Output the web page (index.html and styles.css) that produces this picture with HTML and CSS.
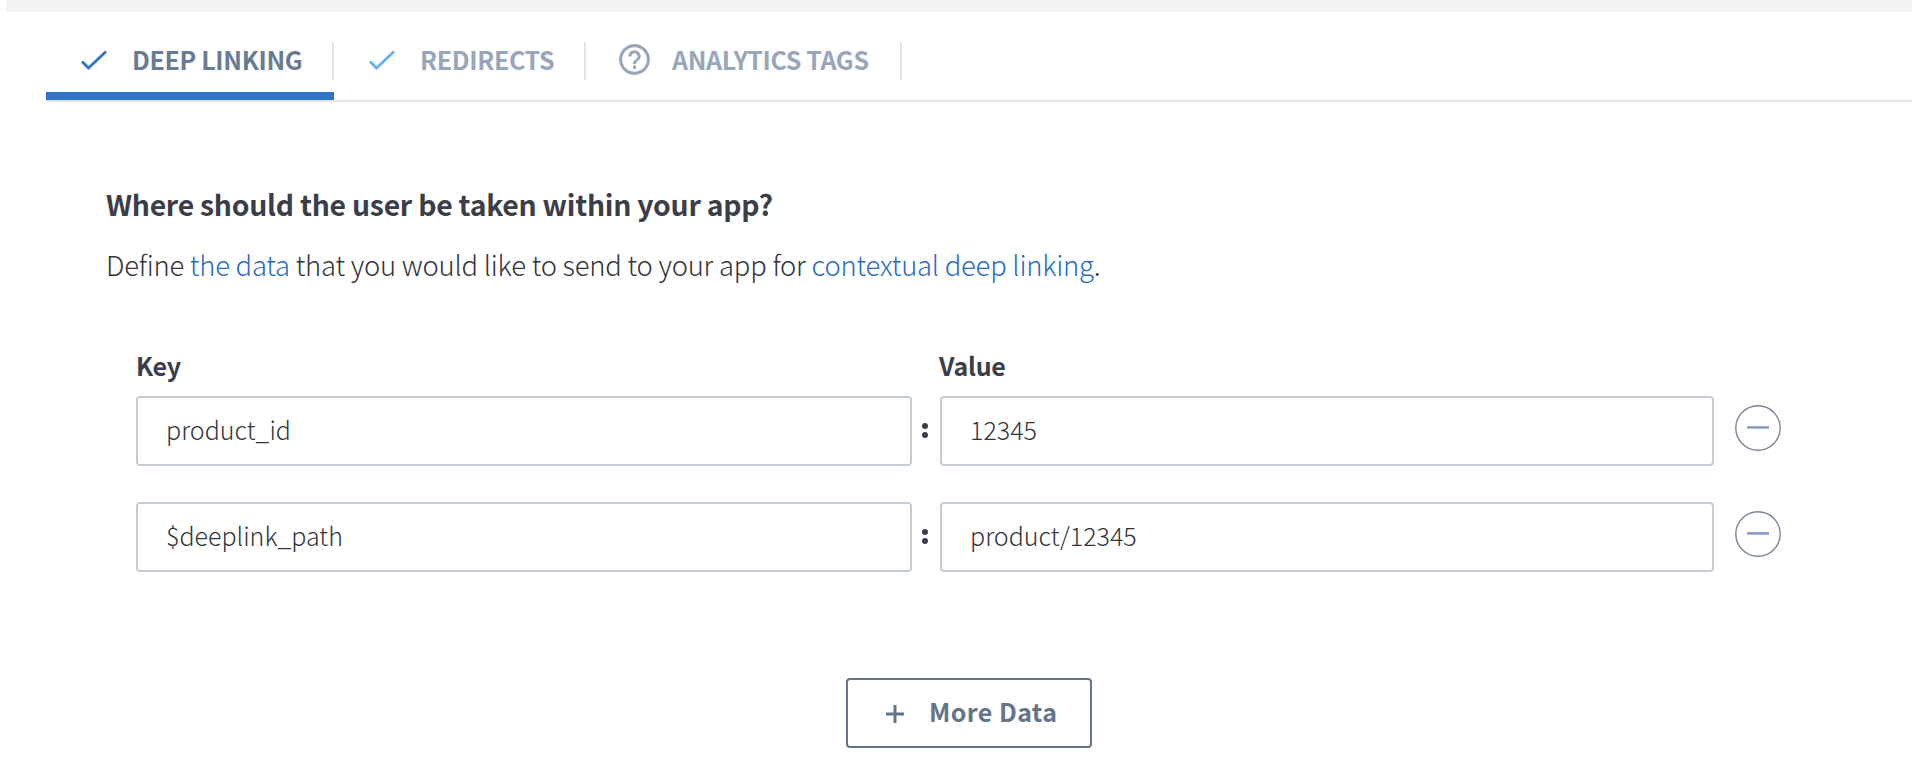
FILE: index.html
```
<!DOCTYPE html>
<html lang="en">
<head>
<meta charset="utf-8">
<title>Deep Linking</title>
<link rel="stylesheet" href="styles.css">
</head>
<body>
<div class="topbar"></div>
<nav class="tabs">
  <a class="tab tab-deep active"><svg class="check" viewBox="0 0 28 24"><path d="M2 12.500L8.500 19L26 2.500"/></svg><span>DEEP LINKING</span></a>
  <a class="tab tab-redirects"><svg class="check" viewBox="0 0 28 24"><path d="M2 12.500L8.500 19L26 2.500"/></svg><span>REDIRECTS</span></a>
  <a class="tab tab-tags"><svg class="help" viewBox="0 0 24 24"><path d="M11 18h2v-2h-2v2zm1-16C6.48 2 2 6.480 2 12s4.480 10 10 10 10-4.480 10-10S17.520 2 12 2zm0 18c-4.410 0-8-3.590-8-8s3.590-8 8-8 8 3.590 8 8-3.590 8-8 8zm0-14c-2.210 0-4 1.790-4 4h2c0-1.100.9-2 2-2s2 .9 2 2c0 2-3 1.750-3 5h2c0-2.250 3-2.500 3-5 0-2.210-1.790-4-4-4z"/></svg><span>ANALYTICS TAGS</span></a>
</nav>
<main class="content">
  <h1 class="title"><span>Where should the user be taken within your app?</span></h1>
  <p class="intro"><span>Define <a>the data</a> that you would like to send to your app for <a>contextual deep linking</a>.</span></p>
  <section class="fields">
    <div class="labels"><span>Key</span><span>Value</span></div>
    <div class="row">
      <div class="field"><span>product_id</span></div>
      <div class="colon"><i></i><i></i></div>
      <div class="field"><span>12345</span></div>
      <svg class="remove" viewBox="0 0 46 46"><circle cx="23" cy="23" r="22.2"/><path d="M12 22.400H34"/></svg>
    </div>
    <div class="row">
      <div class="field"><span>$deeplink_path</span></div>
      <div class="colon"><i></i><i></i></div>
      <div class="field"><span>product/12345</span></div>
      <svg class="remove" viewBox="0 0 46 46"><circle cx="23" cy="23" r="22.2"/><path d="M12 22.400H34"/></svg>
    </div>
  </section>
  <button class="more"><svg class="plus" viewBox="0 0 18 18"><path d="M0 9H18M9 0V18"/></svg><span>More Data</span></button>
</main>
</body>
</html>
```
FILE: styles.css
```
* { box-sizing: border-box; }
body {
  margin: 0;
  height: 780px;
  overflow: hidden;
  background: #fff;
  color: #3b3e48;
  font-family: "Noto Sans CJK SC", "Noto Sans", sans-serif;
}
svg { display: block; flex: none; fill: none; }
span { white-space: nowrap; }
.topbar { height: 12px; margin-left: 6px; background: #f4f4f4; }
.tabs { display: flex; height: 90px; margin-left: 46px; border-bottom: 2px solid #e1e6eb; }
.tab {
  position: relative;
  display: flex;
  align-items: center;
  height: 88px;
  padding-top: 8px;
  color: #98a6bb;
  font-size: 25px;
  font-weight: 700;
  line-height: 36px;
  letter-spacing: -0.34px;
}
.tab span { margin-top: -3px; }
.tab::after {
  content: "";
  position: absolute;
  right: 0;
  top: 30px;
  width: 2px;
  height: 38px;
  background: #e1e6eb;
}
.tab-deep { width: 288px; padding-left: 34px; gap: 24px; }
.tab-redirects { width: 252px; padding-left: 34px; gap: 24px; }
.tab-tags { width: 316px; padding-left: 30px; gap: 19px; }
.active { color: #697b93; border-bottom: 8px solid #2f74c5; padding-top: 16px; }
.check { width: 28px; height: 24px; margin-top: 1px; stroke: #64b1fa; stroke-width: 2.8; }
.active .check { stroke: #2f74c5; }
.help { width: 37px; height: 37px; margin-top: -1px; fill: #98a6bb; }
.content { display: flex; flex-direction: column; padding-left: 106px; }
.title { margin: 79px 0 0; height: 46px; font-size: 28.400px; line-height: 46px; font-weight: 700; letter-spacing: -0.26px; }
.intro { margin: 14px 0 0; height: 46px; font-size: 27.400px; line-height: 46px; font-weight: 300; letter-spacing: -0.215px; color: #32343b; }
.intro a { color: #286cbd; }
.fields { display: flex; flex-direction: column; width: 1645px; margin: 59px 0 0 30px; }
.labels { display: grid; grid-template-columns: 803px 1fr; height: 50px; font-size: 25px; line-height: 38px; font-weight: 700; letter-spacing: -0.2px; }
.row { display: grid; grid-template-columns: 776px 28px 774px 46px; height: 70px; }
.row + .row { margin-top: 36px; }
.field {
  display: flex;
  align-items: center;
  padding: 0 0 4px 28px;
  border: 2px solid #c4ccd6;
  border-radius: 4px;
  color: #32343b;
  font-size: 25px;
  font-weight: 300;
}
.colon { display: flex; flex-direction: column; align-items: center; gap: 3px; padding: 27px 2px 0 0; }
.colon i { width: 6px; height: 6px; border-radius: 3px; background: #3b3e48; }
.remove { width: 46px; height: 46px; margin: 9px 0 0 21px; stroke: #76859a; stroke-width: 1.400; }
.remove path { stroke: #7f96bd; stroke-width: 2.400; }
.more {
  display: flex;
  align-items: center;
  gap: 25px;
  width: 246px;
  height: 70px;
  margin: 106px 0 0 740px;
  padding: 0 0 4px 38px;
  border: 2px solid #647489;
  border-radius: 4px;
  background: #fff;
  color: #647489;
  font: 700 25px/36px "Noto Sans CJK SC", "Noto Sans", sans-serif;
  letter-spacing: 0.42px;
}
.plus { width: 18px; height: 18px; stroke: #647489; stroke-width: 3; margin-top: 5px; }
```
